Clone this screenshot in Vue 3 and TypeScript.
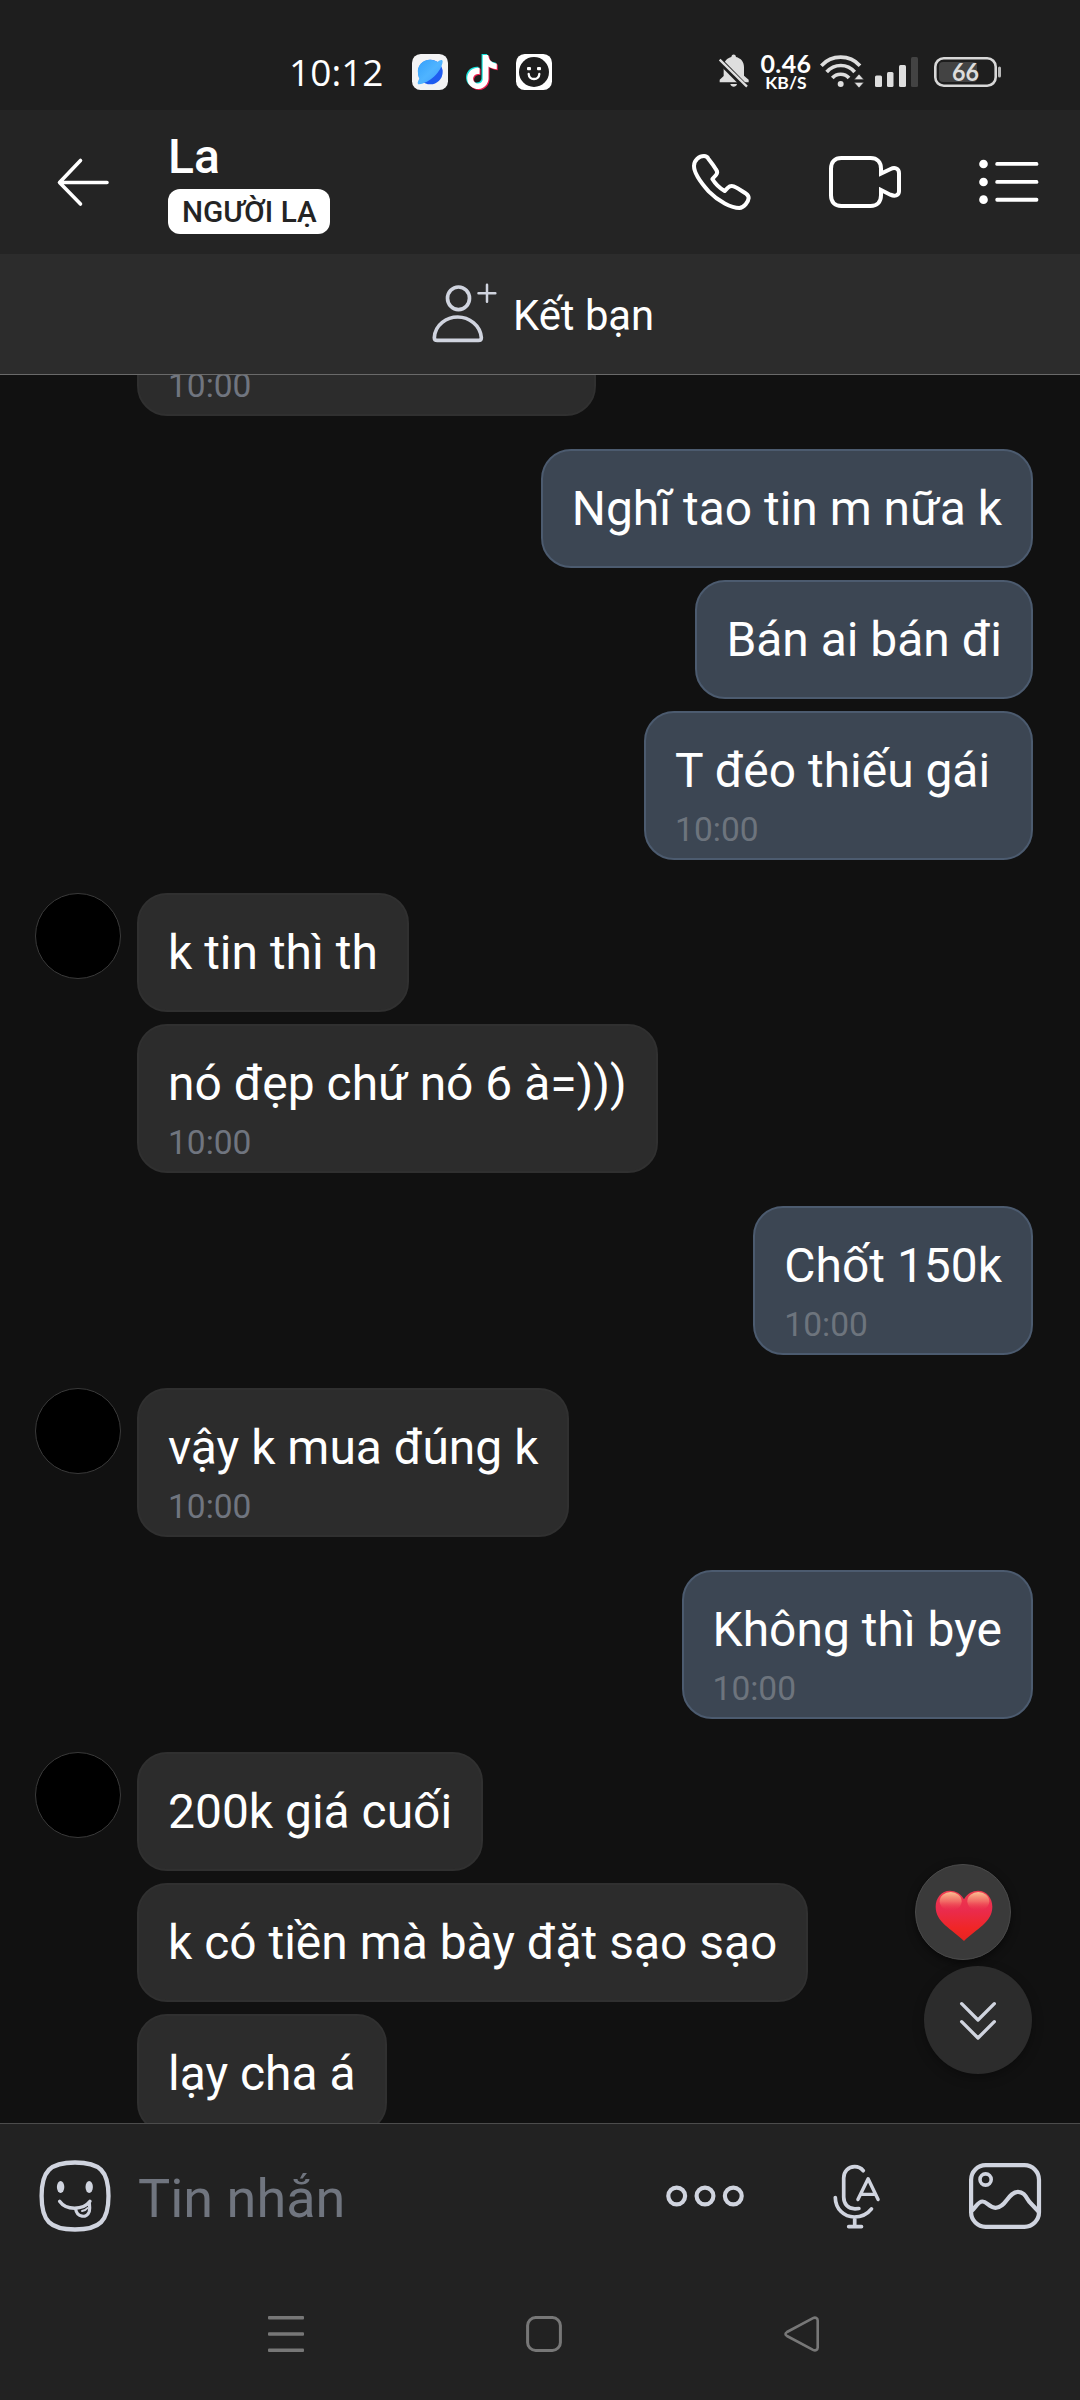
<script setup lang="ts">
interface Message {
  text: string
  time?: string
  clipped?: boolean
}

interface Group {
  side: 'in' | 'out'
  avatar: boolean
  messages: Message[]
}

const groups: Group[] = [
  { side: 'in', avatar: false, messages: [{ text: '', time: '10:00', clipped: true }] },
  {
    side: 'out',
    avatar: false,
    messages: [
      { text: 'Nghĩ tao tin m nữa k' },
      { text: 'Bán ai bán đi' },
      { text: 'T đéo thiếu gái ', time: '10:00' },
    ],
  },
  {
    side: 'in',
    avatar: true,
    messages: [{ text: 'k tin thì th' }, { text: 'nó đẹp chứ nó 6 à=)))', time: '10:00' }],
  },
  { side: 'out', avatar: false, messages: [{ text: 'Chốt 150k', time: '10:00' }] },
  { side: 'in', avatar: true, messages: [{ text: 'vậy k mua đúng k', time: '10:00' }] },
  { side: 'out', avatar: false, messages: [{ text: 'Không thì bye', time: '10:00' }] },
  {
    side: 'in',
    avatar: true,
    messages: [
      { text: '200k giá cuối' },
      { text: 'k có tiền mà bày đặt sạo sạo' },
      { text: 'lạy cha á' },
    ],
  },
]

const note =
  'M12.525.02c1.31-.02 2.61-.01 3.91-.02.08 1.53.63 3.09 1.75 4.17 1.12 1.11 2.7 1.62 4.24 1.79v4.03c-1.44-.05-2.89-.35-4.2-.97-.57-.26-1.1-.59-1.62-.93-.01 2.92.01 5.84-.02 8.75-.08 1.4-.54 2.79-1.35 3.94-1.31 1.92-3.58 3.17-5.91 3.21-1.43.08-2.86-.31-4.08-1.03-2.02-1.19-3.44-3.37-3.65-5.71-.02-.5-.03-1-.01-1.49.18-1.9 1.12-3.72 2.58-4.96 1.66-1.44 3.98-2.13 6.15-1.72.02 1.48-.04 2.96-.04 4.44-.99-.32-2.15-.23-3.02.37-.63.41-1.11 1.04-1.36 1.75-.21.51-.15 1.07-.14 1.61.24 1.64 1.82 3.02 3.5 2.87 1.12-.01 2.19-.66 2.77-1.61.19-.33.4-.67.41-1.06.1-1.79.06-3.57.07-5.36.01-4.03-.01-8.05.02-12.07z'
</script>

<template>
  <div class="screen">
    <div class="status">
      <svg class="clock" width="100" height="56" viewBox="0 0 100 56">
        <text x="2" y="42" textLength="94.500" lengthAdjust="spacing">10:12</text>
      </svg>
      <div class="apps">
        <svg width="36" height="36" viewBox="0 0 108 108">
          <defs>
            <linearGradient id="planet" x1="0" y1="0" x2="1" y2="1">
              <stop offset="0" stop-color="#35a0fb" />
              <stop offset="0.5" stop-color="#4fb4ff" />
              <stop offset="1" stop-color="#3f9dff" />
            </linearGradient>
          </defs>
          <rect width="108" height="108" rx="26" fill="#f3f3f4" />
          <circle cx="55" cy="54" r="37" fill="#1f5cf0" />
          <path d="M18 58 C14 35 32 17 54 17 C64 17 71 20 77 24 C84 17 91 16 92 22 C90 52 52 88 21 91 C15 90 17 82 22 74 C19 68 18 63 18 58Z" fill="url(#planet)" />
        </svg>
        <svg width="36" height="36" viewBox="0 0 108 108">
          <g transform="translate(3 0)">
            <path :d="note" fill="#19e3dc" transform="translate(-3.5 0) scale(4.25)" />
            <path :d="note" fill="#f0204f" transform="translate(3 6) scale(4.25)" />
            <path :d="note" fill="#ffffff" transform="translate(0 3) scale(4.25)" />
          </g>
        </svg>
        <svg width="36" height="36" viewBox="0 0 108 108">
          <rect width="108" height="108" rx="26" fill="#fff" />
          <circle cx="54" cy="54" r="45" fill="#1e1e1e" />
          <rect x="33" y="39" width="12" height="10" rx="3" fill="#fff" />
          <rect x="63" y="39" width="12" height="10" rx="3" fill="#fff" />
          <path d="M38 60 C40 80 68 80 70 60" fill="none" stroke="#fff" stroke-width="7" stroke-linecap="round" />
        </svg>
      </div>
      <svg class="bell" width="34" height="36" viewBox="0 0 102 108" fill="#dedede">
        <path d="M8 88 V80 L20 69 V43 C20 24 31 15 43 12 C44 2 56 2 57 12 C72 16 81 26 81 43 V68 L95 80 V88Z" />
        <path d="M40 93 H60 C58 104 42 104 40 93Z" />
        <path d="M4 19 L86 102" stroke="#1e1e1e" stroke-width="18" />
        <path d="M8 20 L90 101" stroke="#dedede" stroke-width="7" />
      </svg>
      <div class="speed">
        <span class="rate">0.46</span>
        <span class="unit">KB/S</span>
      </div>
      <svg class="wifi" width="46" height="36" viewBox="0 0 138 108" fill="none" stroke="#dedede" stroke-width="11">
        <path d="M4 38 C35 4 89 4 120 38" />
        <path d="M20 57 C43 31 82 31 104 57" />
        <path d="M37 75 C50 60 74 60 87 75" />
        <circle cx="62" cy="93" r="9" fill="#dedede" stroke="none" />
        <path d="M102 80 L117 63 L132 80Z M102 88 L117 105 L132 88Z" fill="#dedede" stroke="#1e1e1e" stroke-width="2" />
      </svg>
      <svg class="signal" width="44" height="30" viewBox="0 0 44 30" fill="#dedede">
        <rect x="0" y="18.500" width="7" height="11.500" rx="1.500" />
        <rect x="12" y="15" width="6.500" height="15" rx="1.500" />
        <rect x="24" y="8" width="7" height="22" rx="1.500" />
        <rect x="36" y="0" width="7" height="30" rx="1.500" fill="#434343" />
      </svg>
      <svg class="battery" width="68" height="30" viewBox="0 0 68 30">
        <rect x="5" y="5" width="38" height="20" rx="4" fill="#434343" />
        <rect x="1.300" y="1.300" width="60.400" height="27.400" rx="8.500" fill="none" stroke="#d8d8d8" stroke-width="2.600" />
        <rect x="64" y="9.500" width="3" height="11" rx="1.500" fill="#b8b8b8" />
        <text x="18" y="24" textLength="27" lengthAdjust="spacingAndGlyphs">66</text>
      </svg>
    </div>

    <header class="header">
      <svg class="back" width="56" height="50" viewBox="0 0 56 50" fill="none" stroke="#fff" stroke-width="3.600" stroke-linecap="round" stroke-linejoin="round">
        <path d="M25.500 3.500 L4.500 25.500 L25.500 47 M4.500 25.500 H52" />
      </svg>
      <div class="who">
        <div class="name">La</div>
        <div class="badge">NGƯỜI LẠ</div>
      </div>
      <svg class="phone" width="60" height="60" viewBox="153 126 180 180" fill="none" stroke="#fff" stroke-width="12" stroke-linejoin="round">
        <path d="M192 138 C178 138 162 150 162 168 C162 185 180 215 206 244 C235 274 275 294 298 294 C312 293 325 276 326 264 C326 258 322 254 318 251 C306 243 294 234 281 229 C275 227 268 229 264 233 L254 243 C240 235 225 220 217 207 L228 195 C232 190 232 184 229 180 C222 168 213 156 205 146 C202 140 198 138 192 138Z" />
      </svg>
      <svg class="video" width="76" height="60" viewBox="561 126 228 180" fill="none" stroke="#fff" stroke-width="12">
        <path d="M723 191 V176 C723 156 711 144 692 144 H604 C584 144 573 156 573 176 V256 C573 276 584 288 604 288 H692 C711 288 723 276 723 256 V240 L751 254 C764 260 777 257 777 244 V190 C777 175 764 171 752 177 Z" />
        <path d="M723 202 V230" stroke="#242424" stroke-width="14" />
      </svg>
      <svg class="list" width="62" height="60" viewBox="1013 126 186 180" fill="#fff">
        <circle v-for="y in [162, 216, 269]" :key="y" cx="1029.500" :cy="y" r="13" />
        <rect v-for="y in [156, 210, 263.500]" :key="'l' + y" x="1065" :y="y" width="129" height="11.500" rx="5" />
      </svg>
    </header>

    <div class="befriend">
      <svg width="66" height="60" viewBox="95 98 198 180" fill="none" stroke="#d0d4df" stroke-width="11" stroke-linecap="round" stroke-linejoin="round">
        <ellipse cx="174.500" cy="144" rx="33" ry="34" />
        <path d="M102 262 C104 222 140 200 172 200 C206 200 240 224 243 262 C243 267 240 270 234 270 H111 C105 270 102 267 102 262Z" />
        <path d="M234.500 128.500 H285 M260 103 V154" stroke-width="7.500" />
      </svg>
      <span>Kết bạn</span>
    </div>

    <main class="chat">
      <div class="thread">
        <section v-for="(g, gi) in groups" :key="gi" :class="['group', g.side]">
          <div v-if="g.side === 'in'" class="gutter">
            <div v-if="g.avatar" class="avatar"></div>
          </div>
          <div class="stack">
            <div v-for="(m, mi) in g.messages" :key="mi" :class="['bubble', { timed: m.time, clipped: m.clipped }]">
              <div class="text">{{ m.text }}</div>
              <div v-if="m.time" class="time">{{ m.time }}</div>
            </div>
          </div>
        </section>
      </div>
      <div class="fab heart">
        <svg width="60" height="54" viewBox="0 0 180 162">
          <defs>
            <linearGradient id="red" x1="0" y1="0" x2="0" y2="1">
              <stop offset="0" stop-color="#ee3a50" />
              <stop offset="0.4" stop-color="#ea2b4c" />
              <stop offset="0.75" stop-color="#f02626" />
              <stop offset="1" stop-color="#e62320" />
            </linearGradient>
            <linearGradient id="shine" x1="0" y1="0" x2="0" y2="1">
              <stop offset="0" stop-color="#fbc795" stop-opacity="0.95" />
              <stop offset="0.5" stop-color="#f58a72" stop-opacity="0.65" />
              <stop offset="1" stop-color="#ee3a4c" stop-opacity="0" />
            </linearGradient>
          </defs>
          <path d="M90 31 C80 13 64 5 48 5 C22 5 5 27 5 53 C5 100 53 119 90 156 C127 119 175 100 175 53 C175 27 158 5 132 5 C116 5 100 13 90 31Z" fill="url(#red)" />
          <ellipse cx="50" cy="37" rx="33" ry="28" fill="url(#shine)" />
          <ellipse cx="133" cy="37" rx="33" ry="28" fill="url(#shine)" />
        </svg>
      </div>
      <div class="fab down">
        <svg width="44" height="44" viewBox="0 0 132 132" fill="none" stroke="#d0d4df" stroke-width="10" stroke-linecap="round" stroke-linejoin="round">
          <path d="M17 17 L66 66 L115 17 M17 71 L66 120 L115 71" />
        </svg>
      </div>
    </main>

    <footer class="composer">
      <svg class="sticker" width="78" height="80" viewBox="0 0 78 80" fill="none" stroke="#d0d4df" stroke-linecap="round">
        <path d="M39 6.500 C64 6.500 72.500 15 72.500 40 C72.500 65 64 73.500 39 73.500 C14 73.500 5.600 65 5.600 40 C5.600 15 14 6.500 39 6.500Z" stroke-width="4.300" />
        <ellipse cx="24.600" cy="31" rx="3.700" ry="6" fill="#d0d4df" stroke="none" />
        <ellipse cx="53.200" cy="31" rx="3.700" ry="6" fill="#d0d4df" stroke="none" />
        <path d="M23.600 45.300 C30 54.500 47 54.500 54 45.300" stroke-width="3.400" />
        <path d="M39.500 52.500 C41 62 51 62.500 53.300 55.500 C54.200 52.500 53.700 50 53.300 47" stroke-width="3.200" />
        <path d="M46 55 C48.500 54.500 50.500 53.500 51.500 52" stroke-width="2" />
      </svg>
      <span class="placeholder">Tin nhắn</span>
      <svg class="dots" width="80" height="24" viewBox="0 0 80 24" fill="none" stroke="#d0d4df" stroke-width="4.200">
        <circle cx="11.700" cy="12" r="8.400" />
        <circle cx="40" cy="12" r="8.400" />
        <circle cx="68.300" cy="12" r="8.400" />
      </svg>
      <svg class="mic" width="56" height="74" viewBox="0 0 56 74" fill="none" stroke="#d0d4df" stroke-width="3.700" stroke-linecap="round" stroke-linejoin="round">
        <path d="M35.300 10.700 C33 8 30 6.700 26.700 6.700 C20 6.700 15.700 11.500 15.700 18 V37 C15.700 44 20 48.800 27 48.800 L30.900 48.500" />
        <path d="M7.300 37.500 C7.500 49 16 57 26.300 57 C33.500 57 39.500 54 43.500 48.900 M26.700 57 V66 M20.700 66.600 H33.500" />
        <path d="M29.900 39.600 L40.100 18.700 L50.100 39.600 M33 34.400 H47.300" stroke-width="3.400" />
      </svg>
      <svg class="photo" width="78" height="74" viewBox="0 0 78 74" fill="none" stroke="#d0d4df" stroke-width="4.200">
        <rect x="5.100" y="5.200" width="67.900" height="61.600" rx="14.500" />
        <circle cx="19.600" cy="19.500" r="5.600" stroke-width="3.600" />
        <path d="M5.500 51 C10 47 12 41.500 16.500 41.500 C21 41.500 23 47.800 29.500 47.800 C40 47.800 42 31.800 52 31.800 C58 31.800 60 37 63.500 42 L72.500 51.500" />
      </svg>
    </footer>

    <nav class="nav">
      <svg width="36" height="36" viewBox="0 0 36 36" fill="#777">
        <rect y="0" width="36" height="3.500" rx="1" />
        <rect y="16.200" width="36" height="3.500" rx="1" />
        <rect y="32.500" width="36" height="3.500" rx="1" />
      </svg>
      <svg width="36" height="36" viewBox="0 0 36 36" fill="none" stroke="#777" stroke-width="3">
        <rect x="1.600" y="1.600" width="32.800" height="32.800" rx="8" />
      </svg>
      <svg width="36" height="36" viewBox="0 0 36 36" fill="none" stroke="#777" stroke-width="2.600">
        <path d="M3 16 L29 2.200 C31.500 1 33.700 2 33.700 4.500 V31.500 C33.700 34 31.500 35 29 33.800 L3 20 C1 18.800 1 17.200 3 16Z" />
      </svg>
    </nav>
  </div>
</template>

<style>
body {
  background: #222;
}
</style>

<style scoped>
.screen {
  width: 1080px;
  height: 2400px;
  display: flex;
  flex-direction: column;
  overflow: hidden;
  background: #222;
  font-family: Roboto, "Noto Sans", sans-serif;
  color: #fff;
}
svg {
  display: block;
  flex: none;
}

.status {
  height: 110px;
  flex: none;
  display: flex;
  align-items: flex-start;
  background: #1e1e1e;
}
.clock {
  margin: 44px 0 0 287px;
  font: 500 37px "Open Sans", sans-serif;
  fill: #fff;
}
.apps {
  display: flex;
  gap: 16px;
  margin: 54px 0 0 25px;
}
.bell {
  margin: 53px 0 0 165px;
}
.speed {
  display: flex;
  flex-direction: column;
  align-items: center;
  width: 52px;
  margin: 53px 0 0 9px;
  font-family: Lato, sans-serif;
  font-weight: 700;
}
.rate {
  font-size: 25px;
  line-height: 20px;
  letter-spacing: 0.4px;
}
.unit {
  font-size: 17.5px;
  line-height: 20px;
}
.wifi {
  margin: 53px 0 0 8px;
}
.signal {
  margin: 57px 0 0 9px;
}
.battery {
  margin: 57px 0 0 15px;
  font: 700 25px Lato, sans-serif;
  fill: #dcdcdc;
}

.header {
  height: 144px;
  flex: none;
  display: flex;
  align-items: flex-start;
  background: #242424;
}
.back {
  margin: 47px 0 0 55px;
}
.who {
  margin: 19px 0 0 57px;
  display: flex;
  flex-direction: column;
  align-items: flex-start;
  width: 300px;
}
.name {
  font-size: 48px;
  font-weight: 500;
  line-height: 56px;
}
.badge {
  margin-top: 4px;
  height: 45px;
  padding: 0 13.5px 0 14px;
  border-radius: 12px;
  background: #fff;
  color: #242424;
  font-size: 29.7px;
  font-weight: 500;
  line-height: 45px;
}
.phone {
  margin: 42px 0 0 223px;
}
.video {
  margin: 42px 0 0 76px;
}
.list {
  margin: 42px 0 0 75px;
}

.befriend {
  height: 120px;
  flex: none;
  display: flex;
  align-items: center;
  padding-left: 432px;
  gap: 15px;
  background: #2c2c2c;
  border-bottom: 1px solid #6a6a6a;
  font-size: 41.8px;
}
.befriend svg {
  margin-top: -2px;
}
.befriend span {
  line-height: 50px;
  padding-top: 3px;
}

.chat {
  position: relative;
  height: 1748px;
  flex: none;
  overflow: hidden;
  background: #111;
  border-bottom: 1px solid #4c4c4c;
}
.thread {
  display: flex;
  flex-direction: column;
  gap: 33px;
  margin-top: -108px;
}
.group {
  display: flex;
}
.group.out {
  justify-content: flex-end;
  padding-right: 47px;
}
.gutter {
  width: 137px;
  flex: none;
  box-sizing: border-box;
  padding-left: 35px;
}
.avatar {
  width: 86px;
  height: 86px;
  box-sizing: border-box;
  border: 1px solid #3a3a3a;
  border-radius: 50%;
  background: #000;
}
.stack {
  display: flex;
  flex-direction: column;
  align-items: flex-start;
  gap: 12px;
}
.out .stack {
  align-items: flex-end;
}
.bubble {
  box-sizing: border-box;
  height: 119px;
  padding: 28px 29px 0;
  border: 2px solid #303030;
  border-radius: 30px;
  background: #2c2c2c;
}
.out .bubble {
  border-color: #4c5b6f;
  background: #3c4653;
}
.bubble.timed {
  height: 149px;
}
.bubble.clipped {
  width: 459px;
}
.text {
  height: 60px;
  font-size: 47.95px;
  line-height: 60px;
  white-space: pre;
}
.time {
  margin-top: 9px;
  font-size: 33.5px;
  line-height: 40px;
  color: #70757f;
}
.out .time {
  color: #6d747d;
}

.fab {
  position: absolute;
  display: flex;
  align-items: center;
  justify-content: center;
  box-sizing: border-box;
  border-radius: 50%;
}
.heart {
  right: 69px;
  top: 1489px;
  width: 96px;
  height: 96px;
  background: #3a3a3a;
  border: 1px solid #4a4a4a;
  box-shadow: 0 3px 8px rgba(0, 0, 0, 0.5);
}
.heart svg {
  margin: 8px 0 0 2px;
}
.down {
  right: 48px;
  top: 1591px;
  width: 108px;
  height: 108px;
  background: #2c2c2c;
  box-shadow: 0 4px 12px rgba(0, 0, 0, 0.3);
}

.composer {
  height: 144px;
  flex: none;
  display: flex;
  align-items: center;
}
.sticker {
  margin-left: 36px;
}
.placeholder {
  width: 526px;
  margin-left: 24px;
  padding-top: 5px;
  font-size: 54px;
  line-height: 64px;
  color: #70757f;
}
.dots {
  margin-left: 1px;
}
.mic {
  margin: 2px 0 0 83px;
}
.photo {
  margin: 2px 0 0 82px;
}

.nav {
  display: flex;
  padding: 48px 0 0 268px;
  gap: 222px;
}
</style>
